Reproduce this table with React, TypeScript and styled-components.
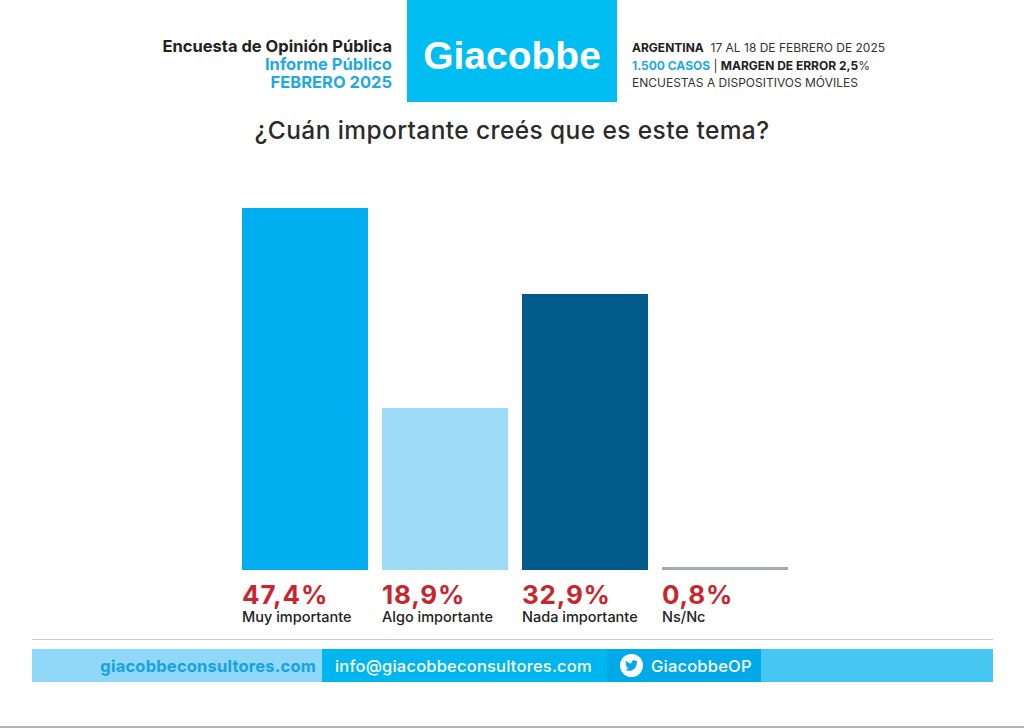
import React from "react";
import styled, { createGlobalStyle } from "styled-components";
import { FaTwitter } from "react-icons/fa";

const GlobalStyle = createGlobalStyle`
  * { box-sizing: border-box; }
  body {
    margin: 0;
    background: #ffffff;
    font-family: Inter, Roboto, "Liberation Sans", sans-serif;
  }
`;

type Answer = { value: string; label: string; height: number; color: string };

const answers: Answer[] = [
  { value: "47,4%", label: "Muy importante", height: 362, color: "#00aeef" },
  { value: "18,9%", label: "Algo importante", height: 162, color: "#9edbf7" },
  { value: "32,9%", label: "Nada importante", height: 276, color: "#005b8a" },
  { value: "0,8%", label: "Ns/Nc", height: 3, color: "#a3abb1" },
];

export default function App() {
  return (
    <>
      <GlobalStyle />
      <StyledPage>
        <StyledHeader>
          <StyledLeftInfo>
            <StyledStrongLine>Encuesta de Opinión Pública</StyledStrongLine>
            <StyledBlueLine>Informe Público</StyledBlueLine>
            <StyledBlueLine>FEBRERO 2025</StyledBlueLine>
          </StyledLeftInfo>
          <StyledLogo>Giacobbe</StyledLogo>
          <StyledRightInfo>
            <StyledMeta>
              <b>ARGENTINA</b>&nbsp; 17 AL 18 DE FEBRERO DE 2025
            </StyledMeta>
            <StyledMeta>
              <StyledBlueBold>1.500 CASOS</StyledBlueBold> | <b>MARGEN DE ERROR 2,5</b>%
            </StyledMeta>
            <StyledMeta>ENCUESTAS A DISPOSITIVOS MÓVILES</StyledMeta>
          </StyledRightInfo>
        </StyledHeader>

        <StyledTitle>¿Cuán importante creés que es este tema?</StyledTitle>

        <StyledChart>
          {answers.map((a) => (
            <StyledColumn key={a.label}>
              <StyledBarArea>
                <StyledBar $color={a.color} style={{ height: a.height }} />
              </StyledBarArea>
              <StyledValue>{a.value}</StyledValue>
              <StyledLabel>{a.label}</StyledLabel>
            </StyledColumn>
          ))}
        </StyledChart>

        <StyledRule />

        <StyledFooter>
          <StyledSite>giacobbeconsultores.com</StyledSite>
          <StyledMail>info@giacobbeconsultores.com</StyledMail>
          <StyledTwitter>
            <StyledBird>
              <FaTwitter size={13} />
            </StyledBird>
            GiacobbeOP
          </StyledTwitter>
          <StyledFiller />
        </StyledFooter>
      </StyledPage>
    </>
  );
}

const StyledPage = styled.div`
  width: 1024px;
  height: 728px;
  display: flex;
  flex-direction: column;
  border-bottom: 2px solid #b3b3b3;
`;

const StyledHeader = styled.header`
  display: grid;
  grid-template-columns: 1fr 210px 1fr;
  column-gap: 15px;
  height: 102px;
`;

const StyledLeftInfo = styled.div`
  padding-top: 37px;
  text-align: right;
  display: flex;
  flex-direction: column;
  align-items: flex-end;
`;

const StyledStrongLine = styled.div`
  font-size: 16.5px;
  font-weight: 700;
  line-height: 18px;
  color: #222222;
  letter-spacing: 0;
  white-space: nowrap;
`;

const StyledBlueLine = styled(StyledStrongLine)`
  color: #1fa9e1;
`;

const StyledLogo = styled.div`
  background: #00bdf2;
  color: #ffffff;
  font-family: "Liberation Sans", Arial, sans-serif;
  font-weight: 700;
  font-size: 39px;
  display: flex;
  align-items: center;
  justify-content: center;
  padding-top: 10px;
`;

const StyledRightInfo = styled.div`
  padding-top: 39px;
  display: flex;
  flex-direction: column;
`;

const StyledMeta = styled.div`
  font-size: 12px;
  line-height: 17.5px;
  color: #333333;
  letter-spacing: 0;
  white-space: nowrap;
  b {
    font-weight: 700;
    color: #222222;
  }
`;

const StyledBlueBold = styled.span`
  font-weight: 700;
  color: #1fa9e1;
`;

const StyledTitle = styled.h1`
  margin: 13px 0 0;
  text-align: center;
  font-size: 24.5px;
  font-weight: 500;
  line-height: 30px;
  letter-spacing: 0.4px;
  color: #2b2b2b;
`;

const StyledChart = styled.div`
  display: flex;
  gap: 14px;
  padding-left: 242px;
  margin-top: 8px;
`;

const StyledColumn = styled.div`
  width: 126px;
  display: flex;
  flex-direction: column;
`;

const StyledBarArea = styled.div`
  height: 417px;
  display: flex;
  align-items: flex-end;
`;

const StyledBar = styled.div<{ $color: string }>`
  width: 100%;
  background: ${({ $color }) => $color};
`;

const StyledValue = styled.div`
  margin-top: 11px;
  font-size: 26px;
  font-weight: 700;
  line-height: 27px;
  color: #c8262f;
  letter-spacing: 0.8px;
`;

const StyledLabel = styled.div`
  font-size: 14.5px;
  font-weight: 500;
  line-height: 17px;
  color: #222222;
  white-space: nowrap;
`;

const StyledRule = styled.hr`
  margin: 14px 31px 0 32px;
  border: none;
  border-top: 1px solid #cccccc;
  height: 0;
`;

const StyledFooter = styled.footer`
  margin: 9px 31px 0 32px;
  height: 33px;
  display: flex;
  font-size: 16.5px;
  font-weight: 500;
  letter-spacing: 0.2px;
`;

const StyledSite = styled.div`
  width: 290px;
  background: #8fd8f7;
  color: #17a2df;
  font-weight: 700;
  display: flex;
  align-items: center;
  justify-content: flex-end;
  padding-right: 6px;
  white-space: nowrap;
`;

const StyledMail = styled.div`
  width: 285px;
  background: #00b6ee;
  color: #ffffff;
  display: flex;
  align-items: center;
  padding-left: 13px;
  white-space: nowrap;
`;

const StyledTwitter = styled.div`
  width: 154px;
  background: #00aae9;
  color: #ffffff;
  display: flex;
  align-items: center;
  gap: 8px;
  padding-left: 13px;
`;

const StyledBird = styled.span`
  width: 23px;
  height: 23px;
  border-radius: 50%;
  background: #ffffff;
  color: #00aae9;
  display: flex;
  align-items: center;
  justify-content: center;
`;

const StyledFiller = styled.div`
  flex: 1;
  background: #45c7f2;
`;
